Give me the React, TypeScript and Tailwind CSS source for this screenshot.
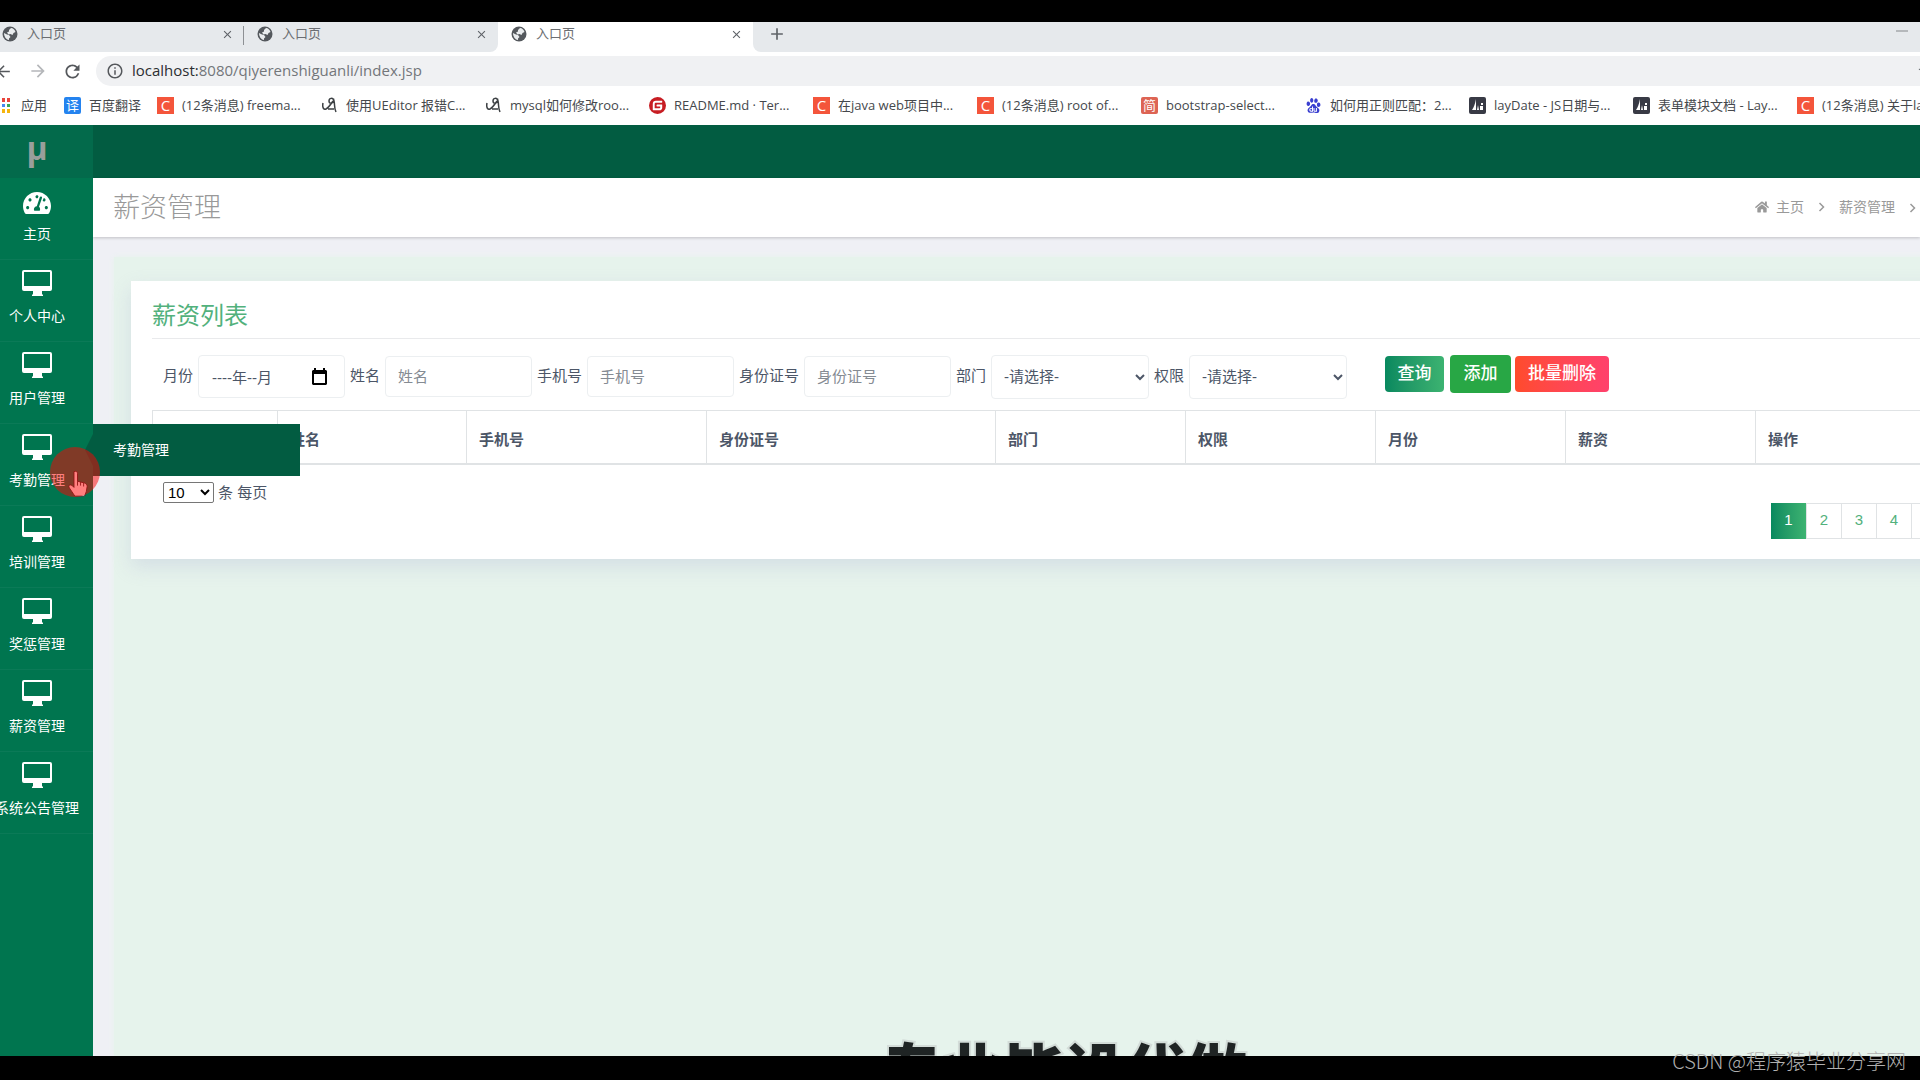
import { useState } from "react";
import type { ReactNode } from "react";
import { FaHome, FaTachometerAlt } from "react-icons/fa";
import { MdArrowBack, MdArrowForward, MdClose, MdAdd, MdRefresh, MdInfoOutline, MdStar } from "react-icons/md";
import { SiBaidu, SiGitee } from "react-icons/si";

const menus = ["个人中心", "用户管理", "考勤管理", "培训管理", "奖惩管理", "薪资管理", "系统公告管理"];

const columns = [
  { title: "", width: "w-[125px]" },
  { title: "姓名", width: "w-[189px]" },
  { title: "手机号", width: "w-[240px]" },
  { title: "身份证号", width: "w-[289px]" },
  { title: "部门", width: "w-[190px]" },
  { title: "权限", width: "w-[190px]" },
  { title: "月份", width: "w-[190px]" },
  { title: "薪资", width: "w-[190px]" },
  { title: "操作", width: "w-[191px]" },
];

const bookmarks: { icon: ReactNode; title: string }[] = [
  { icon: <CsdnIcon />, title: "(12条消息) freema..." },
  { icon: <ScriptIcon />, title: "使用UEditor 报错C..." },
  { icon: <ScriptIcon />, title: "mysql如何修改roo..." },
  { icon: <SiGitee className="size-[17px] text-[#c71d23]" />, title: "README.md · Ter..." },
  { icon: <CsdnIcon />, title: "在java web项目中..." },
  { icon: <CsdnIcon />, title: "(12条消息) root of..." },
  { icon: <WordIcon word="简" color="bg-[#dd6454]" />, title: "bootstrap-select..." },
  { icon: <SiBaidu className="size-[15px] text-[#3a3fd0]" />, title: "如何用正则匹配：2..." },
  { icon: <LayuiIcon />, title: "layDate - JS日期与..." },
  { icon: <LayuiIcon />, title: "表单模块文档 - Lay..." },
  { icon: <CsdnIcon />, title: "(12条消息) 关于la..." },
];

export default function App() {
  return (
    <div className="relative flex h-screen flex-col overflow-hidden bg-black pt-[22px] pb-6 font-['Open_Sans','Noto_Sans_CJK_SC',sans-serif]">
      <div className="relative flex min-h-0 flex-1 flex-col overflow-hidden">
        <Browser />
        <div className="flex min-h-0 flex-1 bg-[#eff0f5]">
          <Sidebar />
          <Main />
        </div>
        <p className="pointer-events-none absolute top-full left-[881px] -mt-6 text-[61px] leading-[80px] font-black whitespace-nowrap text-[#1f2424] [paint-order:stroke] [-webkit-text-stroke:4px_#d3dcd8]">
          专业毕设代做
        </p>
      </div>
      <p className="absolute right-[14px] bottom-[5px] text-xl leading-7 font-light whitespace-nowrap text-[#b0b0b0] font-['Noto_Sans_CJK_SC',sans-serif]">
        CSDN @程序猿毕业分享网
      </p>
    </div>
  );
}

function Browser() {
  return (
    <div className="shrink-0 overflow-hidden bg-white whitespace-nowrap text-[#45484c]">
      <div className="flex h-[30px] bg-white text-[13px] text-[#6b6e72]">
        <div className="flex w-[498px] rounded-br-lg bg-[#e6e9ec]">
          <Tab />
          <div className="my-1 -ml-px h-[19px] w-px bg-[#8d9094]" />
          <Tab />
        </div>
        <div className="flex w-[255px] pl-[11px]">
          <Tab />
        </div>
        <div className="flex flex-1 items-center rounded-bl-lg bg-[#e6e9ec] pr-3 pb-[6px] pl-[14px]">
          <button aria-label="新标签页">
            <MdAdd className="size-5 text-[#5f6368]" />
          </button>
          <button aria-label="最小化" className="ml-auto h-2 w-3 border-t-2 border-[#b5b8bb]" />
        </div>
      </div>
      <div className="flex h-[38px] items-center text-[#55585c]">
        <button aria-label="后退" className="-ml-[6px] w-[19px]">
          <MdArrowBack className="size-[19px]" />
        </button>
        <button aria-label="前进" className="ml-[15px] w-[20px] text-[#b5b7ba]">
          <MdArrowForward className="size-[20px]" />
        </button>
        <button aria-label="刷新" className="ml-[14px] w-5">
          <MdRefresh className="size-[21px]" />
        </button>
        <div className="-mr-4 ml-[14px] flex h-[30px] flex-1 items-center rounded-full bg-[#f0f1f3] pl-[10px]">
          <MdInfoOutline className="size-[18px] shrink-0" />
          <p className="ml-2 flex-1 pb-[2px] text-[15px] leading-5 text-[#73767a]">
            <span className="text-[#2b2e31]">localhost:</span>8080/qiyerenshiguanli/index.jsp
          </p>
          <MdStar className="mr-px size-[18px]" />
        </div>
      </div>
      <nav className="flex h-[35px] items-center pb-[5px] text-[13px] leading-5">
        <a href="#" className="flex w-[64px] shrink-0 items-center">
          <AppsIcon />
          <span className="ml-[10px]">应用</span>
        </a>
        <a href="#" className="flex w-[93px] shrink-0 items-center gap-2">
          <WordIcon word="译" color="bg-[#2483ef]" />
          百度翻译
        </a>
        {bookmarks.map((b, i) => (
          <a href="#" key={i} className="flex w-[164px] shrink-0 items-center gap-2">
            <span className="flex w-[17px] justify-center">{b.icon}</span>
            {b.title}
          </a>
        ))}
      </nav>
    </div>
  );
}

function Tab() {
  return (
    <div className="flex w-[244px] shrink-0 items-center pr-[10px] pb-[6px] pl-[2px] nth-[3]:w-[254px] nth-[3]:pl-[13px]">
      <GlobeIcon />
      <span className="ml-[9px]">入口页</span>
      <button aria-label="关闭" className="ml-auto">
        <MdClose className="size-[13px] text-[#5f6368]" />
      </button>
    </div>
  );
}

function Sidebar() {
  return (
    <aside className="relative z-10 w-[93px] shrink-0 bg-[#00754f] text-sm text-white">
      <div className="flex h-[53px] items-center justify-center bg-[#036a4b] pr-[19px] pb-2 text-[32px] leading-8 font-bold text-[#999f9c]">
        μ
      </div>
      <ul>
        <li className="flex h-[82px] flex-col items-center border-b border-[#0b7a57] pt-[11px] pr-[19px]">
          <FaTachometerAlt className="size-[28px]" />
          <a href="#" className="mt-[7px] leading-5 whitespace-nowrap">主页</a>
        </li>
        {menus.map((name) => (
          <li
            key={name}
            className="relative flex h-[82px] flex-col items-center border-b border-[#0b7a57] pt-[10px] pr-[19px]"
          >
            <DesktopIcon />
            <a href="#" className="mt-[10px] leading-5 whitespace-nowrap">{name}</a>
            {name === "考勤管理" && <SubMenu name={name} />}
          </li>
        ))}
      </ul>
    </aside>
  );
}

function SubMenu({ name }: { name: string }) {
  return (
    <>
      <div className="absolute top-0 left-full flex h-[52px] w-[207px] items-center bg-[#025c41] pl-5">
        <a href="#">{name}</a>
      </div>
      <svg className="absolute top-[10px] right-0 h-8 w-2" viewBox="0 0 8 32" fill="#025c41">
        <path d="M8 0v32L0 16z" />
      </svg>
      <svg className="absolute top-[45px] left-[67px] h-7 w-[21px]" viewBox="0 0 24 32">
        <path
          d="M8 3c2-1 4 0 4 2v9l8 2c2 1 3 2 3 4l-1 6-2 5H9l-6-9c-2-3 0-5 3-3l2 2z"
          fill="#fff"
          stroke="#222"
        />
        <path d="M12 14v5M15.500 15v4M19 16v4" stroke="#222" />
      </svg>
      <div className="absolute top-[23px] left-[50px] size-[50px] rounded-full bg-[#ff0000]/50" />
    </>
  );
}

function Main() {
  return (
    <main className="flex min-w-0 flex-1 flex-col overflow-hidden text-[15px] text-[#4c5667] font-['Liberation_Sans','Noto_Sans_CJK_SC',sans-serif]">
      <div className="h-[53px] shrink-0 bg-[#025c41]" />
      <header className="flex h-[59px] shrink-0 items-center justify-between bg-white pl-5 text-[#999] shadow-[0_1px_3px_rgba(0,0,0,0.2)]">
        <h1 className="text-[27px] leading-9 font-light">薪资管理</h1>
        <nav className="flex items-center pr-1 pb-[2px] text-sm leading-5">
          <FaHome className="mr-[7px] size-[14px]" />
          <a href="#">主页</a>
          <Chevron />
          <a href="#">薪资管理</a>
          <span className="-mr-[14px]">
            <Chevron />
          </span>
        </nav>
      </header>
      <div className="-mr-[71px] mt-5 ml-[21px] flex-1 bg-[#e6f3ec] pt-6 pr-[23px] pl-[17px] shadow-[0_0_6px_#e6f3ec]">
        <section className="bg-white px-[21px] py-5 shadow-[0_8px_18px_rgba(190,200,220,0.45)]">
          <h2 className="border-b border-[#e9eaec] pb-[7px] text-2xl leading-[30px] text-[#52b17c]">薪资列表</h2>
          <SearchForm />
          <table className="mt-3 w-full table-fixed border-collapse text-left text-[15px]">
            <thead>
              <tr className="h-[53px]">
                {columns.map((c, i) => (
                  <th
                    key={i}
                    className={`${c.width} border border-b-2 border-[#e0e3e5] px-3 pt-[6px] leading-5 font-bold text-[#4c5667]`}
                  >
                    {c.title}
                  </th>
                ))}
              </tr>
            </thead>
          </table>
          <Pager />
        </section>
      </div>
    </main>
  );
}

const field = "h-[41px] w-[147px] rounded-sm border border-[#eceff1] bg-white px-3 text-[15px] placeholder:text-[#858b93]";
const dropdown = "h-11 w-[158px] rounded-sm border border-[#eceff1] bg-white pl-2 text-[15px]";

function SearchForm() {
  const [month, setMonth] = useState("----年--月");

  return (
    <form className="mt-4 flex h-[43px] items-center gap-[5px] pl-[11px] whitespace-nowrap">
      <label htmlFor="month">月份</label>
      <div className="relative">
        <input
          id="month"
          className="h-[43px] w-[147px] rounded-sm border border-[#eceff1] bg-white pl-[13px] text-[15px]"
          value={month}
          onChange={(e) => setMonth(e.target.value)}
        />
        <CalendarIcon />
      </div>
      <label htmlFor="name">姓名</label>
      <input id="name" placeholder="姓名" className={field} />
      <label htmlFor="phone">手机号</label>
      <input id="phone" placeholder="手机号" className={field} />
      <label htmlFor="idcard">身份证号</label>
      <input id="idcard" placeholder="身份证号" className={field} />
      <label htmlFor="dept">部门</label>
      <select id="dept" className={dropdown}>
        <option>-请选择-</option>
      </select>
      <label htmlFor="role">权限</label>
      <select id="role" className={dropdown}>
        <option>-请选择-</option>
      </select>
      <div className="mb-[5px] ml-[33px] flex items-center text-[17px] leading-6 font-medium text-white">
        <button type="button" className="h-9 w-[59px] rounded-sm bg-linear-to-r from-[#07895f] to-[#3cb371]">
          查询
        </button>
        <button type="button" className="ml-[6px] h-[38px] w-[61px] rounded-sm bg-[#28a745]">
          添加
        </button>
        <button type="button" className="ml-1 h-9 w-[94px] rounded-sm bg-linear-to-r from-[#ff4b2b] to-[#ff416c]">
          批量删除
        </button>
      </div>
    </form>
  );
}

function Pager() {
  const [page, setPage] = useState(1);

  return (
    <div className="mt-[17px] flex items-start justify-between pl-[11px]">
      <label className="flex items-center gap-1 whitespace-nowrap">
        <select className="h-[21px] w-[51px] rounded-xs border border-[#767676] bg-white text-[15px] leading-4 text-black">
          <option>10</option>
          <option>25</option>
          <option>50</option>
        </select>
        条 每页
      </label>
      <div className="mt-[21px] flex h-9 border-y border-r border-[#e0e3e5]">
        {[1, 2, 3, 4, 5].map((n) => (
          <button
            key={n}
            onClick={() => setPage(n)}
            className={
              n === page
                ? "-my-px w-[35px] bg-linear-to-r from-[#07895f] to-[#3cb371] text-white"
                : "w-[35px] border-l border-[#e0e3e5] text-[#52b17c]"
            }
          >
            {n}
          </button>
        ))}
      </div>
    </div>
  );
}

/* icons */

function Chevron() {
  return (
    <svg className="mx-[14px] inline h-[10px] w-[7px]" viewBox="0 0 7 10" fill="none" stroke="#999" strokeWidth="1.500">
      <path d="M1.500 1l4 4-4 4" />
    </svg>
  );
}

function DesktopIcon() {
  return (
    <svg className="h-[26px] w-[30px] shrink-0" viewBox="0 0 30 26">
      <path
        fillRule="evenodd"
        fill="#fff"
        d="M2 0h26a2 2 0 0 1 2 2v17a2 2 0 0 1-2 2h-8v3l1 1v1H10v-1l1-1v-3H2a2 2 0 0 1-2-2V2a2 2 0 0 1 2-2zM2 2v14h26V2z"
      />
    </svg>
  );
}

function CalendarIcon() {
  return (
    <svg className="absolute top-[13px] right-[18px] h-[17px] w-[15px]" viewBox="0 0 15 17">
      <path fillRule="evenodd" d="M2 2V0h2v2h7V0h2v2h1l1 1v13l-1 1H1l-1-1V3l1-1zM2 6v9h11V6z" />
    </svg>
  );
}

function GlobeIcon() {
  return (
    <svg className="size-4 shrink-0" viewBox="0 0 16 16">
      <circle cx="8" cy="8" r="7.500" fill="#54585d" />
      <path
        d="M9 2c2 0 4 2 4.500 4l-2 1-1 2-2-1-2 .5L5 6.500l2-1L7 4zM2 7l3 1.500 2 .5 1.500 2L7 12.500V14c-3-.5-5-3.500-5-7z"
        fill="#e9ecee"
      />
    </svg>
  );
}

function AppsIcon() {
  return (
    <svg className="h-[15px] w-[11px]" viewBox="0 0 11 15">
      <path d="M2 0h3v4H2z" fill="#e8453c" />
      <path d="M7 0h3v4H7z" fill="#e8453c" />
      <path d="M2 6h3v3H2z" fill="#4688f1" />
      <path d="M7 6h3v3H7z" fill="#3aa757" />
      <path d="M2 11h3v4H2zM7 11h3v4H7z" fill="#f5b50f" />
    </svg>
  );
}

function CsdnIcon() {
  return (
    <span className="flex size-[17px] items-center justify-center bg-[#f4553b] text-[15px] leading-4 text-white">C</span>
  );
}

function WordIcon({ word, color }: { word: string; color: string }) {
  return (
    <span className={`${color} flex size-[17px] items-center justify-center rounded-xs text-[13px] leading-4 text-white`}>
      {word}
    </span>
  );
}

function LayuiIcon() {
  return (
    <svg className="size-[17px]" viewBox="0 0 17 17">
      <rect width="17" height="17" rx="2" fill="#383a45" />
      <path d="M7 2v11H3c2-3 3-6 4-11zM9 8l1 5H8zM12 6h2v2h-2zM11 9h3v4h-3z" fill="#fff" />
    </svg>
  );
}

function ScriptIcon() {
  return (
    <svg className="h-4 w-[15px]" viewBox="0 0 15 16" fill="none" stroke="#3c4043" strokeWidth="1.500">
      <path d="M1 6c-1 5 1 7 3 6s5-5 7-8M12 4c-1-4-5-3-5 0s4 3 5 0c1 4 0 7 2 11M6 12h6" />
    </svg>
  );
}
